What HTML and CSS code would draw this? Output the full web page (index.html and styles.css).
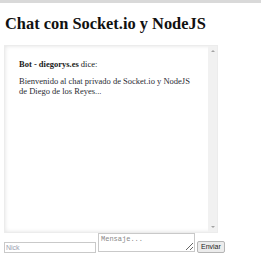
FILE: index.html
```html
<!DOCTYPE html>
<html>
<head>
    <title>Chat con Socket.io y NodeJS</title>
    <link rel="stylesheet" href="styles.css">
</head>
<body>
    <div class="topbar"></div>
    <h1 class="title">Chat con Socket.io y NodeJS</h1>

    <div class="chat-box">
        <div class="messages" id="messages">
            <div class="message">
                <p class="message-author"><b>Bot - diegorys.es</b> dice:</p>
                <p class="message-text">Bienvenido al chat privado de Socket.io y NodeJS de Diego de los Reyes...</p>
            </div>
        </div>
        <div class="scrollbar">
            <span class="arrow arrow-up"></span>
            <span class="arrow arrow-down"></span>
        </div>
    </div>

    <form class="send-form" id="sendForm">
        <input type="text" class="nick-input" placeholder="Nick">
        <textarea class="message-input" placeholder="Mensaje..."></textarea>
        <button type="submit" class="send-button">Enviar</button>
    </form>
</body>
</html>
```

FILE: styles.css
```css
* {
    box-sizing: border-box;
}

body {
    margin: 0;
    padding: 0 4px;
    font-family: "Liberation Serif", serif;
    background-color: #fff;
}

.topbar {
    height: 3px;
    margin: 0 -4px;
    background-color: #d9d9d9;
}

.title {
    margin: 11px 0 0 1px;
    font-size: 16.4px;
    line-height: 20px;
    color: #111;
}

.chat-box {
    display: flex;
    width: 214px;
    height: 188px;
    margin-top: 11px;
    border: 1px solid #ececec;
    box-shadow: inset 0 0 4px rgba(0, 0, 0, 0.12);
}

.messages {
    flex: 1;
    padding: 13px 0 0 14px;
    color: #2b2b33;
    font-size: 8.5px;
}

.message p {
    margin: 0;
}

.message-author {
    line-height: 10px;
    color: #1a1a1a;
}

.message-text {
    margin-top: 7px !important;
    line-height: 10px;
    width: 180px;
}

.scrollbar {
    width: 9px;
    display: flex;
    flex-direction: column;
    justify-content: space-between;
    align-items: center;
    padding: 4px 0;
    background-color: #f1f1f1;
}

.arrow {
    width: 0;
    height: 0;
    border-left: 2px solid transparent;
    border-right: 2px solid transparent;
}

.arrow-up {
    border-bottom: 2px solid #a3a3a3;
}

.arrow-down {
    border-top: 2px solid #a3a3a3;
}

.send-form {
    display: flex;
    align-items: flex-end;
    margin-top: 0;
    font-family: "Liberation Sans", Arial, sans-serif;
}

.nick-input {
    width: 92px;
    height: 11px;
    margin: 0 2px 0 0;
    padding: 0 1px;
    border: 1px solid #c9c9c9;
    font-size: 7px;
    font-family: "Liberation Sans", Arial, sans-serif;
}

.nick-input::placeholder {
    color: #9aa0b0;
}

.message-input {
    width: 97px;
    height: 19px;
    margin: 0 2px 1px 0;
    padding: 1px 2px;
    border: 1px solid #c9c9c9;
    font-size: 7px;
    font-family: "Liberation Mono", monospace;
    resize: both;
}

.message-input::placeholder {
    color: #888;
}

.send-button {
    height: 12px;
    padding: 0 3px;
    border: 1px solid #b5b5b5;
    border-radius: 2px;
    background-color: #ececec;
    color: #222;
    font-size: 7px;
    font-family: "Liberation Sans", Arial, sans-serif;
    line-height: 10px;
}
```
